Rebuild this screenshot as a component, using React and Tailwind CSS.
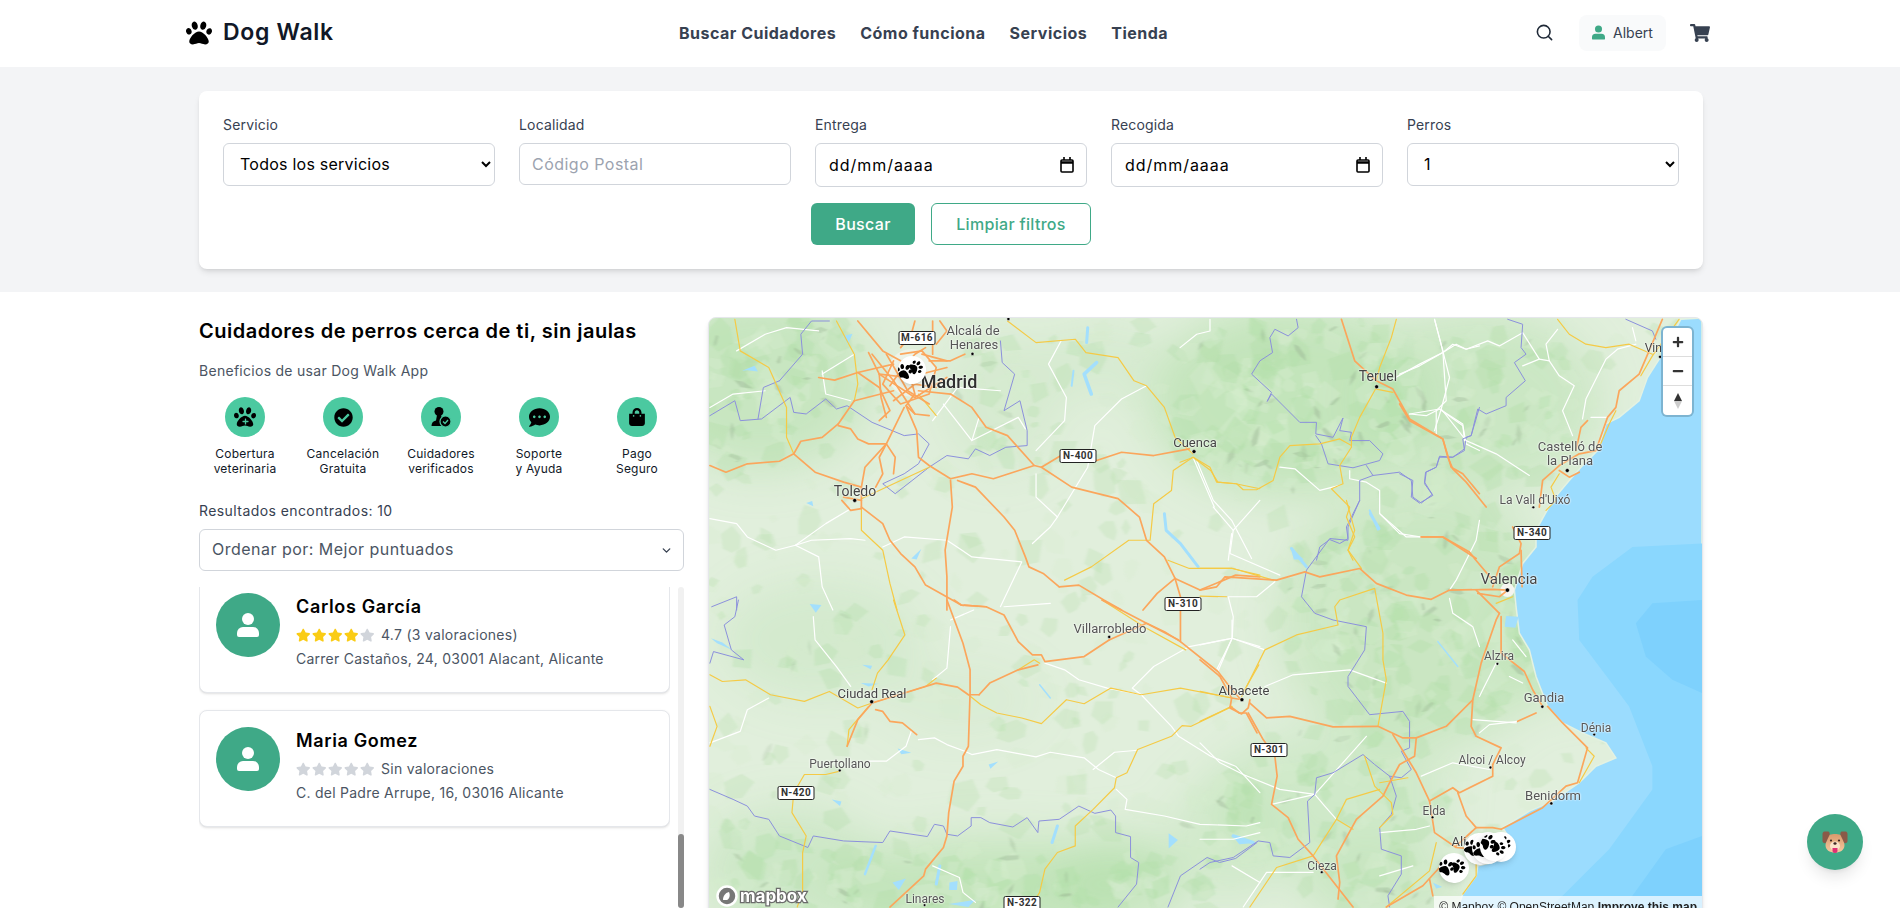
import { Search, ChevronDown } from 'lucide-react';
import { FaPaw, FaShoppingCart, FaCheckCircle, FaCommentDots, FaShoppingBag, FaStar, FaPlus, FaMinus } from 'react-icons/fa';

const MAP_LEFT = 708;
const MAP_TOP = 317;

// map data was traced per area, each one has its own offset and scale
const zones = {
    a: [700, 310, 2.8, 3],
    b: [700, 600, 2.8, 3],
    c: [1200, 500, 3, 3],
    d: [1180, 310, 3, 3],
    e: [1400, 310, 3, 3],
};

const toPage = (zone, flat) => {
    const [ox, oy, sx, sy] = zones[zone];
    const out = [];
    for (let i = 0; i < flat.length; i += 2) {
        out.push([+(ox + flat[i] / sx).toFixed(1), +(oy + flat[i + 1] / sy).toFixed(1)]);
    }
    return out;
};

const toPoints = (zone, flat) => toPage(zone, flat).map((p) => p.join(',')).join(' ');

const roads = {
    a: {
        orange: [
            [440, 30, 510, 120, 560, 150], [650, 30, 650, 130], [690, 150, 620, 130],
            [330, 200, 375, 208, 440, 185, 540, 160], [430, 270, 540, 240], [385, 340, 430, 270],
            [700, 250, 760, 290, 800, 350, 860, 375, 935, 465, 955, 470, 1010, 435, 1110, 450, 1180, 425, 1270, 435, 1370, 415],
            [935, 465, 820, 505, 760, 490, 700, 505, 640, 465, 610, 440, 605, 360, 575, 285],
            [570, 290, 520, 400, 460, 470, 450, 530, 450, 570],
            [25, 465, 70, 485, 130, 460, 220, 452, 260, 430, 280, 392, 340, 380, 385, 340],
            [260, 430, 320, 485, 400, 515, 450, 530], [385, 345, 420, 355, 440, 385, 470, 400, 520, 400, 545, 440, 540, 490],
            [520, 400, 500, 440, 510, 490, 490, 530], [700, 510, 705, 590, 685, 720, 690, 800, 690, 900],
            [450, 590, 510, 640, 530, 690, 560, 730, 600, 770, 630, 825, 680, 855, 730, 885, 800, 890],
            [720, 510, 770, 530, 850, 620, 880, 660, 910, 740, 920, 770, 960, 790, 1005, 830],
            [955, 470, 1040, 530, 1170, 565, 1230, 620, 1250, 690, 1300, 740, 1330, 805, 1345, 860],
            [1330, 805, 1400, 840, 1500, 795, 1568, 800], [1330, 805, 1280, 850, 1240, 900], [1005, 830, 1060, 825, 1130, 870, 1180, 900],
            [540, 150, 510, 220, 560, 280, 640, 250, 660, 170, 620, 120, 560, 130], [500, 190, 600, 260, 690, 200], [480, 130, 540, 210, 600, 310, 640, 315],
            [610, 240, 700, 250], [395, 570, 420, 600, 450, 595, 450, 570, 400, 560], [640, 150, 700, 150, 740, 130],
            [470, 125, 500, 190, 505, 260, 520, 320], [530, 225, 560, 180, 600, 130, 630, 110], [540, 270, 600, 220, 660, 230], [560, 110, 590, 70, 600, 30],
            [500, 190, 580, 200, 690, 170], [600, 310, 575, 285, 600, 250, 590, 210], [520, 130, 580, 240, 640, 280], [660, 100, 690, 60, 670, 30], [440, 185, 500, 230, 530, 300, 500, 330],
        ],
        yellow: [
            [95, 25, 110, 120, 190, 170, 240, 290, 240, 380, 260, 430], [380, 30, 410, 90, 430, 130, 440, 220, 430, 270],
            [860, 30, 940, 95, 1050, 85, 1080, 125, 1170, 140, 1215, 210, 1250, 225, 1300, 290, 1330, 380, 1380, 430],
            [1380, 440, 1325, 480, 1320, 540, 1270, 580, 1260, 690, 1200, 690, 1095, 770, 1020, 810],
            [1380, 440, 1430, 480, 1450, 515, 1500, 520, 1568, 535], [450, 565, 560, 510, 640, 470],
            [450, 590, 450, 660, 510, 720, 530, 820, 550, 900], [1310, 750, 1370, 775, 1490, 775, 1568, 795], [610, 250, 660, 315],
        ],
        white: [
            [25, 625, 100, 640, 130, 680, 210, 720, 265, 705, 330, 740, 340, 830, 370, 900], [265, 705, 310, 690, 420, 685, 460, 690],
            [265, 705, 350, 640, 420, 595], [510, 710, 570, 680, 690, 690, 760, 740, 900, 755, 840, 890],
            [1010, 90, 975, 160, 1025, 260, 1020, 330, 940, 420], [1250, 225, 1180, 265, 1105, 345, 1085, 470, 1000, 620, 980, 650, 930, 700],
            [1000, 620, 940, 560, 940, 490], [25, 290, 90, 250, 180, 240], [340, 190, 430, 130], [680, 280, 760, 390, 890, 320, 910, 355],
            [1380, 440, 1440, 590], [100, 120, 180, 70, 240, 50, 330, 60],
            [340, 180, 350, 250, 420, 270], [650, 330, 720, 230, 840, 240], [760, 390, 780, 320],
        ],
        purple: [
            [25, 315, 95, 270, 110, 330, 170, 325, 250, 260, 260, 305, 295, 310, 350, 265, 380, 295, 410, 285, 480, 335, 570, 375, 610, 370, 640, 400, 610, 460, 570, 490, 510, 520, 545, 550, 640, 470, 690, 435, 750, 445, 770, 415, 810, 435, 855, 410, 915, 405, 915, 360, 895, 270, 850, 300, 880, 190, 845, 155, 840, 90],
            [220, 210, 285, 130, 280, 70, 310, 30, 360, 30], [220, 210, 175, 230, 160, 325], [30, 890, 100, 860, 100, 900],
        ],
    },
    b: {
        orange: [
            [690, 0, 735, 130, 755, 210, 755, 280, 750, 440, 735, 470, 735, 500, 710, 545, 695, 640, 690, 710, 680, 745, 630, 810, 625, 830, 530, 924],
            [710, 0, 730, 15, 800, 20, 850, 45, 890, 125, 930, 165, 955, 165, 965, 185, 1075, 170, 1145, 120],
            [780, 285, 810, 250, 890, 210, 945, 195], [480, 310, 660, 250, 720, 262, 750, 285, 780, 285], [480, 310, 440, 360, 410, 440],
            [490, 330, 510, 335, 530, 365, 565, 370, 605, 405], [1145, 120, 1250, 70, 1340, 120], [1345, 0, 1345, 125, 1450, 215, 1490, 270, 1515, 300],
            [1125, 0, 1250, 70, 1300, 95, 1345, 125], [1485, 320, 1510, 340, 1530, 340, 1560, 400],
        ],
        yellow: [
            [540, 0, 572, 105, 525, 180, 495, 220, 480, 270], [25, 225, 60, 245, 125, 240, 195, 285, 290, 305, 360, 275, 440, 325, 480, 310],
            [410, 440, 415, 390, 470, 320], [480, 310, 630, 260, 660, 235],
            [390, 515, 350, 525, 290, 525, 260, 580, 255, 640, 295, 710, 285, 760, 285, 880, 270, 924],
            [750, 285, 785, 315, 830, 340, 900, 355, 955, 372, 1025, 300, 1075, 312, 1150, 265, 1235, 285, 1345, 265, 1490, 295],
            [1490, 320, 1375, 380, 1350, 378, 1320, 410, 1225, 450, 1195, 520, 1165, 535, 1160, 565, 1100, 630, 1050, 680, 1050, 740, 1000, 760, 965, 810, 950, 880, 925, 924],
            [1125, 0, 1250, 85, 1360, 150], [890, 210, 935, 180, 950, 190], [25, 320, 45, 380, 25, 440], [1565, 195, 1520, 280],
        ],
        white: [
            [315, 50, 320, 120, 380, 200, 420, 260], [190, 295, 130, 330, 110, 395, 25, 430], [700, 80, 690, 205, 650, 240], [850, 20, 980, 10], [765, 30, 700, 60],
            [590, 395, 575, 440, 520, 485, 470, 485], [610, 420, 655, 415, 690, 435, 740, 455, 760, 465, 830, 450, 940, 472, 980, 458, 1075, 475, 1115, 510, 1165, 535],
            [1100, 510, 1160, 458, 1225, 452], [965, 190, 1020, 210, 1060, 240, 1140, 265, 1235, 285, 1320, 380, 1340, 410, 1430, 470, 1500, 500, 1568, 580],
            [1235, 285, 1210, 265, 1270, 200, 1370, 140, 1490, 115, 1568, 140], [1490, 115, 1450, 215], [1490, 60, 1490, 115],
            [1165, 570, 1195, 600, 1190, 630, 1300, 650, 1400, 675, 1530, 680, 1568, 670], [650, 800, 725, 835, 735, 880, 770, 910], [1490, 800, 1568, 850],
        ],
        purple: [
            [25, 570, 90, 600, 130, 620, 150, 650, 190, 660, 220, 710, 300, 745, 315, 710, 400, 725, 510, 730, 530, 695, 635, 712, 655, 675, 680, 680, 690, 705, 720, 710, 758, 680, 758, 655, 785, 655, 810, 670, 875, 683, 915, 655, 945, 700, 948, 665, 1005, 660, 1060, 620, 1105, 642, 1150, 632, 1163, 650, 1163, 700, 1205, 712, 1205, 775, 1228, 790, 1222, 855, 1170, 924],
            [1310, 924, 1345, 830, 1420, 775, 1455, 790, 1500, 778, 1560, 730], [25, 190, 35, 155, 120, 180, 85, 150, 65, 75, 95, 50, 105, 0],
        ],
    },
    c: {
        orange: [
            [0, 480, 60, 530, 95, 595, 127, 600],
            [0, 270, 50, 260, 75, 230, 230, 240, 315, 215, 360, 230, 480, 205, 530, 250, 620, 285, 695, 298, 750, 270, 880, 268, 925, 270],
            [95, 595, 90, 625, 125, 643, 145, 625, 150, 600],
            [150, 610, 200, 655, 270, 650, 400, 682, 535, 680, 610, 715, 650, 715, 740, 680, 820, 600, 845, 490, 890, 360, 900, 340],
            [145, 640, 190, 720, 225, 770, 232, 830, 215, 915, 265, 955, 295, 1020, 340, 1070, 460, 1224],
            [580, 705, 650, 820, 690, 905, 705, 1000, 770, 1045, 835, 1050], [650, 715, 645, 770, 600, 795, 570, 850, 550, 890, 470, 960, 410, 1070, 420, 1150, 415, 1200],
            [690, 905, 760, 865, 780, 880, 880, 830, 880, 795], [775, 880, 800, 950, 830, 985, 880, 985, 905, 990], [770, 1040, 830, 985],
            [905, 990, 1030, 925, 1100, 860, 1135, 850, 1165, 745, 1090, 670, 1045, 620], [820, 600, 815, 680, 830, 710, 905, 745, 880, 795],
            [900, 340, 830, 270], [905, 350, 905, 460, 975, 515, 1000, 570, 1030, 620], [955, 665, 1010, 640],
            [665, 110, 730, 110, 810, 155, 825, 175, 880, 240], [965, 150, 968, 260], [940, 80, 965, 130, 960, 160, 900, 200, 880, 260],
            [560, 1224, 670, 1160, 720, 1105], [690, 1140, 700, 1190], [835, 280, 900, 290, 925, 270],
        ],
        yellow: [
            [440, 0, 465, 90, 445, 150, 485, 205], [0, 205, 100, 205, 220, 240], [0, 288, 80, 290], [0, 575, 95, 595], [0, 665, 95, 620],
            [125, 590, 195, 450, 290, 405, 415, 375, 405, 320, 420, 300, 525, 265, 550, 400, 550, 480, 560, 540, 535, 680],
            [495, 770, 525, 860, 575, 910, 580, 945, 540, 985], [540, 850, 625, 835], [150, 1224, 230, 1105, 340, 1070, 410, 960, 440, 900, 540, 870],
            [410, 960, 460, 990], [710, 1030, 690, 1115, 560, 1224], [1140, 850, 1185, 770, 1160, 745], [830, 1090, 830, 1130, 790, 1185], [890, 310, 940, 290],
        ],
        white: [
            [40, 20, 100, 90, 90, 160, 240, 225], [100, 90, 180, 0], [225, 245, 170, 290, 85, 290, 100, 350, 97, 415, 50, 510], [0, 435, 97, 415, 195, 450],
            [0, 730, 60, 790, 130, 825, 240, 870, 345, 885, 375, 920, 410, 960], [195, 560, 280, 525, 450, 510, 560, 550], [215, 915, 345, 885, 500, 710],
            [0, 1020, 100, 1020, 180, 1000], [750, 295, 760, 340, 820, 380, 840, 440], [890, 490, 850, 570, 840, 590], [820, 660, 950, 670], [665, 830, 760, 790, 870, 810],
            [840, 700, 870, 675, 955, 665], [540, 1000, 650, 990, 690, 980], [940, 420, 980, 470], [930, 530, 970, 550], [540, 40, 600, 100, 665, 110],
            [840, 60, 830, 120, 800, 180, 770, 240, 750, 270], [130, 1224, 200, 1120, 340, 1120], [540, 1130, 640, 1100],
        ],
        purple: [
            [480, 0, 445, 80, 445, 120, 390, 115, 320, 210, 305, 290, 345, 340, 400, 360, 500, 380, 495, 450, 445, 530, 445, 560, 510, 645, 610, 635, 630, 665, 630, 745, 605, 755, 635, 810, 605, 835, 570, 830, 525, 795, 490, 765, 400, 820, 350, 835, 345, 885, 323, 905, 330, 1030, 270, 1075, 220, 1070, 210, 1030, 175, 1025, 100, 1075, 30, 1090, 0, 1110],
            [570, 830, 590, 890, 575, 945, 540, 985, 545, 1050, 605, 1070, 605, 1125, 565, 1190, 570, 1224],
        ],
    },
    d: {
        orange: [[485, 25, 525, 150, 590, 210, 640, 235, 690, 325, 790, 385, 815, 470, 850, 490, 900, 550], [725, 680, 790, 680, 860, 725, 890, 745]],
        yellow: [
            [650, 25, 635, 80, 600, 170, 590, 210], [590, 230, 540, 320, 515, 380, 515, 410, 480, 465, 490, 520, 455, 535, 510, 590, 500, 620, 525, 680, 505, 720, 520, 750],
            [0, 455, 40, 440, 90, 470, 110, 515, 170, 520, 190, 538, 230, 538, 280, 510, 300, 440, 330, 405, 420, 400, 480, 385, 515, 405], [590, 235, 640, 245],
        ],
        white: [
            [0, 110, 50, 70, 90, 60, 90, 25], [300, 470, 345, 475, 420, 540, 480, 525], [510, 480, 510, 505, 560, 515, 600, 540, 600, 610, 680, 680, 725, 680],
            [765, 25, 790, 120, 800, 270, 770, 300, 770, 370], [640, 205, 720, 160, 790, 125, 830, 100, 860, 115, 900, 105],
            [690, 310, 740, 315, 780, 295, 850, 345, 860, 400], [50, 450, 100, 570, 155, 630, 215, 745], [155, 670, 145, 750], [860, 400, 900, 420],
        ],
        purple: [
            [350, 25, 355, 50, 325, 75, 285, 55, 270, 80, 278, 125, 240, 150, 215, 190, 275, 245, 262, 272, 275, 250, 360, 335, 410, 335, 408, 370, 460, 380, 490, 322, 480, 360, 515, 365, 510, 390, 570, 390, 610, 430, 600, 450, 520, 472, 445, 460, 425, 400, 408, 375],
            [560, 465, 580, 495, 660, 485, 695, 510, 700, 560, 725, 578, 758, 552, 735, 515, 738, 485, 770, 470, 780, 437, 820, 440, 855, 415, 860, 380, 875, 375, 900, 290],
            [580, 495, 540, 510, 540, 570, 500, 650, 505, 685, 480, 700, 450, 688, 420, 710, 410, 750],
        ],
    },
    e: {
        orange: [
            [0, 280, 30, 330, 130, 385, 145, 440, 160, 475, 200, 515, 260, 590], [790, 25, 750, 120, 720, 190, 660, 240, 650, 290, 625, 320, 590, 420, 540, 430, 480, 465, 430, 510, 420, 590],
            [565, 330, 545, 350, 530, 420], [480, 480, 510, 500, 540, 485],
        ],
        yellow: [[475, 25, 510, 70, 560, 100, 620, 110, 690, 100, 760, 130], [840, 25, 760, 135, 725, 195], [480, 490, 455, 530, 470, 570, 440, 600], [650, 300, 630, 340, 600, 410]],
        white: [
            [105, 25, 130, 120, 150, 200, 125, 295, 200, 390, 290, 430, 390, 495],
            [0, 190, 60, 165, 130, 125, 160, 100, 200, 115, 265, 90, 300, 105, 370, 65, 420, 145, 450, 150, 440, 100, 475, 55],
            [450, 150, 480, 195, 525, 225, 490, 300, 520, 375], [30, 310, 120, 295, 190, 340, 195, 390], [125, 295, 105, 360], [370, 165, 420, 145],
            [550, 325, 560, 265, 620, 145, 655, 115, 710, 100], [575, 320, 625, 320], [700, 50, 710, 90],
        ],
        purple: [
            [325, 25, 370, 40, 365, 110, 380, 130, 345, 155, 378, 210, 320, 260, 320, 285, 260, 310, 235, 295, 215, 375, 190, 385, 195, 420, 160, 440, 120, 440, 110, 470, 80, 485, 75, 520, 100, 555, 60, 578, 35, 560, 40, 510, 0, 490],
            [680, 25, 760, 60, 770, 85],
        ],
    },
};

// long thin reservoirs, drawn as wide strokes
const rivers = [
    ['a', [1300, 610, 1305, 660, 1345, 700, 1395, 770], 3], ['a', [1110, 155, 1075, 190, 1095, 250], 3.5], ['a', [1085, 50, 1082, 95], 3], ['a', [1045, 180, 1040, 225], 2],
    ['c', [275, 145, 320, 200], 3], ['c', [715, 425, 775, 500], 1.5], ['c', [510, 30, 535, 88], 2], ['b', [950, 255, 980, 295], 1.5], ['b', [1000, 680, 985, 730], 3],
    ['b', [490, 740, 460, 825], 2.5], ['b', [670, 800, 660, 855], 3], ['d', [572, 610, 598, 655], 3], ['c', [100, 1010, 160, 1030], 3.5],
];

const lakes = [
    ['a', [115, 180, 150, 165, 160, 182, 130, 178]], ['a', [400, 75, 425, 68, 412, 100]], ['a', [590, 745, 618, 716, 605, 748]], ['a', [295, 578, 312, 572, 315, 588]],
    ['b', [305, 12, 338, 15, 322, 38]], ['b', [28, 115, 60, 128, 88, 150, 45, 130]], ['b', [452, 195, 480, 198, 476, 208]], ['b', [448, 250, 498, 252, 470, 260]],
    ['b', [552, 447, 590, 460, 562, 464]], ['b', [367, 600, 394, 606, 390, 620]], ['b', [807, 495, 834, 486, 812, 508]], ['b', [1312, 702, 1338, 722, 1312, 748]],
    ['b', [1490, 708, 1548, 732, 1510, 735]], ['b', [697, 850, 720, 846, 718, 873, 696, 873]], ['b', [537, 850, 575, 838, 555, 873]], ['b', [695, 915, 770, 902, 750, 924]],
    ['c', [920, 348, 958, 350, 948, 383, 916, 380]], ['c', [700, 1150, 728, 1164, 710, 1168]], ['d', [332, 712, 372, 748, 342, 748]],
];

const coast = [
    ...toPage('e', [845, 25, 790, 130, 745, 200, 720, 270, 660, 320, 620, 340, 595, 420, 545, 470, 510, 510, 460, 570]),
    ...toPage('c', [1060, 0, 1010, 90, 1010, 140, 970, 190, 945, 270, 950, 320, 960, 400, 990, 450, 1010, 530, 1045, 620, 1090, 670, 1150, 700, 1220, 730, 1250, 775, 1190, 800, 1140, 850, 1060, 905, 990, 935, 910, 985, 945, 1040, 880, 1090, 835, 1100, 830, 1130, 790, 1185, 760, 1270]),
    [1703, 924], [1703, 317],
];

const seaMid = [
    ...toPage('c', [1510, 130, 1300, 140, 1180, 230, 1135, 300, 1140, 420, 1230, 540, 1290, 620, 1360, 800, 1360, 870, 1230, 1050, 1090, 1190, 1000, 1270]),
    [1703, 924],
];

const seaDeep = toPage('c', [1510, 300, 1360, 310, 1310, 370, 1340, 470, 1420, 540, 1510, 580]);
const seaDeepLow = toPage('c', [1510, 1010, 1400, 1050, 1300, 1190, 1240, 1270, 1510, 1270]);

// greener and darker zones of the terrain: x, y, radius x, radius y, strength
const hills = [
    [760, 380, 110, 90, 0.8], [1290, 400, 140, 95, 0.95], [1480, 400, 120, 90, 0.7], [1420, 620, 140, 130, 0.75], [1560, 640, 70, 60, 0.6],
    [1330, 800, 120, 70, 0.55], [1000, 890, 170, 50, 0.95], [790, 870, 90, 60, 0.65], [1120, 880, 60, 45, 0.9], [1380, 885, 80, 40, 0.7],
    [1000, 400, 60, 70, 0.35], [820, 640, 100, 60, 0.4], [1230, 840, 60, 60, 0.5], [1100, 360, 60, 40, 0.3], [960, 700, 80, 40, 0.2],
];

const strengthAt = (x, y) => {
    let s = 0.1;
    hills.forEach(([cx, cy, rx, ry, v]) => {
        const d = ((x - cx) / rx) ** 2 + ((y - cy) / ry) ** 2;
        if (d < 1) s += v * (1 - d * 0.6);
    });
    return Math.min(s, 1);
};

const buildTerrain = () => {
    let seed = 4217;
    const rnd = () => {
        seed = (seed * 16807) % 2147483647;
        return seed / 2147483647;
    };
    const patches = [];
    for (let i = 0; i < 2600; i++) {
        const x = MAP_LEFT + rnd() * 995;
        const y = MAP_TOP + rnd() * 600;
        const s = strengthAt(x, y);
        if (rnd() > s + 0.1) continue;
        const dark = rnd() < s * 0.22;
        const r = dark ? 3 + rnd() * 8 : 5 + rnd() * 13;
        const squash = dark ? 0.3 : 0.6 + rnd() * 0.4;
        const turn = rnd() * 3.14;
        const count = 4 + Math.floor(rnd() * 3);
        const pts = [];
        for (let k = 0; k < count; k++) {
            const a = (k / count) * 6.283;
            const rr = r * (0.7 + rnd() * 0.5);
            const px = Math.cos(a) * rr;
            const py = Math.sin(a) * rr * squash;
            pts.push(`${(x + px * Math.cos(turn) - py * Math.sin(turn)).toFixed(1)},${(y + px * Math.sin(turn) + py * Math.cos(turn)).toFixed(1)}`);
        }
        patches.push({
            pts: pts.join(' '),
            fill: dark ? '#93ad8d' : rnd() < 0.5 ? '#b4dfab' : '#d5ecce',
            opacity: dark ? 0.14 + s * 0.26 : 0.25 + s * 0.2,
        });
    }
    return patches;
};

const terrain = buildTerrain();

const labels = [
    ['Madrid', 948, 381, 'text-[18px] font-medium text-[#2f2f2f]'], ['Alcalá de', 972, 329, 'text-[13px] text-[#555]'], ['Henares', 973, 343, 'text-[13px] text-[#555]'],
    ['Toledo', 854, 490, 'text-[14px] text-[#444]'], ['Cuenca', 1194, 441, 'text-[13px] text-[#444]'], ['Teruel', 1377, 375, 'text-[14px] text-[#444]'],
    ['Vinaròs', 1664, 347, 'text-[12px] text-[#444]'], ['Castelló de', 1569, 445, 'text-[13px] text-[#555]'], ['la Plana', 1569, 459, 'text-[13px] text-[#555]'],
    ["La Vall d'Uixó", 1534, 499, 'text-[12px] text-[#555]'], ['Valencia', 1508, 578, 'text-[15px] text-[#444]'], ['Alzira', 1498, 655, 'text-[12px] text-[#555]'],
    ['Gandia', 1543, 696, 'text-[13px] text-[#555]'], ['Dénia', 1595, 727, 'text-[12px] text-[#555]'], ['Alcoi / Alcoy', 1491, 759, 'text-[12px] text-[#555]'],
    ['Benidorm', 1552, 794, 'text-[13px] text-[#555]'], ['Elda', 1433, 810, 'text-[12px] text-[#555]'], ['Cieza', 1321, 865, 'text-[12px] text-[#555]'],
    ['Albacete', 1243, 689, 'text-[13px] text-[#444]'], ['Villarrobledo', 1109, 627, 'text-[13px] text-[#555]'], ['Ciudad Real', 871, 692, 'text-[13px] text-[#444]'],
    ['Puertollano', 839, 763, 'text-[12px] text-[#555]'], ['Linares', 924, 898, 'text-[12px] text-[#555]'], ['Alicante', 1474, 840, 'text-[13px] text-[#444]'],
];

const cityDots = [
    [972, 353, 1.6], [854, 500, 2], [1194, 451, 2], [1377, 386, 2], [1661, 356, 1.6], [1568, 470, 2], [1534, 507, 1.4], [1508, 590, 2.2], [1498, 664, 1.4], [1543, 707, 1.6],
    [1595, 735, 1.4], [1491, 768, 1.4], [1552, 804, 1.6], [1433, 818, 1.4], [1322, 873, 1.4], [1242, 700, 2], [1109, 637, 1.6], [871, 702, 2], [839, 771, 1.4], [924, 906, 1.4], [1008, 318, 1.6],
];

const shields = [
    ['M-616', 916, 337], ['N-400', 1077, 455], ['N-310', 1182, 603], ['N-340', 1531, 532], ['N-301', 1268, 749], ['N-420', 795, 792], ['N-322', 1021, 902],
];

const pins = [
    [911, 369, 28, 20], [1453, 867, 30, 35], [1500, 846, 30, 0], [1479, 848, 32, 40], [1487, 847, 32, 20], [1493, 846, 28, 70],
];

const benefits = [
    { lines: ['Cobertura', 'veterinaria'], icon: <VetIcon /> },
    { lines: ['Cancelación', 'Gratuita'], icon: <FaCheckCircle size={19} /> },
    { lines: ['Cuidadores', 'verificados'], icon: <VerifiedIcon /> },
    { lines: ['Soporte', 'y Ayuda'], icon: <FaCommentDots size={21} /> },
    { lines: ['Pago', 'Seguro'], icon: <FaShoppingBag size={18} /> },
];

const sitters = [
    { name: 'Carlos García', rating: 4, text: '4.7 (3 valoraciones)', address: 'Carrer Castaños, 24, 03001 Alacant, Alicante' },
    { name: 'Maria Gomez', rating: 0, text: 'Sin valoraciones', address: 'C. del Padre Arrupe, 16, 03016 Alicante' },
];

function VetIcon() {
    return (
        <span className="relative flex items-center justify-center">
            <FaPaw size={22} />
            <FaPlus size={7} className="absolute top-[12px] left-[7.5px] text-[#4bc9a0]" />
        </span>
    );
}

function VerifiedIcon() {
    return (
        <svg width="22" height="22" viewBox="0 0 22 22" fill="#000">
            <circle cx="9" cy="5.5" r="4.5" />
            <path d="M7 9h4l1 4h2.5l-1.5 7H1.500c0-3 1.500-5 4.500-5.500z" />
            <circle cx="15.500" cy="15.500" r="5.500" stroke="#4bc9a0" strokeWidth="1.200" />
            <path d="M13 15.500l2 2 3-3.500" stroke="#4bc9a0" strokeWidth="1.300" fill="none" />
        </svg>
    );
}

function PersonIcon({ className }) {
    return (
        <svg className={className} viewBox="0 0 22 24" fill="currentColor">
            <circle cx="11" cy="6" r="6" />
            <path d="M6 14h10a6 6 0 0 1 6 6v2a2 2 0 0 1-2 2H2a2 2 0 0 1-2-2v-2a6 6 0 0 1 6-6z" />
        </svg>
    );
}

function DogFace() {
    return (
        <svg width="26" height="24" viewBox="0 0 26 24">
            <defs>
                <linearGradient id="dogFur" x1="0" y1="0" x2="0" y2="1">
                    <stop offset="0" stopColor="#d99a6c" />
                    <stop offset="1" stopColor="#f4c9a0" />
                </linearGradient>
            </defs>
            <path d="M5 7C6 3 20 3 21 7l1.500 8c0 5-4 7.500-9.500 7.500S3.500 20 3.500 15z" fill="url(#dogFur)" />
            <path d="M6 1.500H2.500C1 1.500.500 3 .500 4v7c0 2 2.500 3 3.500 1.500L7.500 5C8 3.500 7.500 1.500 6 1.500z" fill="#8a5a48" />
            <path d="M20 1.500h3.500c1.500 0 2 1.500 2 2.500v7c0 2-2.500 3-3.500 1.500L18.500 5C18 3.500 18.500 1.500 20 1.500z" fill="#8a5a48" />
            <ellipse cx="13" cy="16" rx="5" ry="4.500" fill="#fbe3ca" />
            <circle cx="9" cy="10.500" r="1.100" fill="#3a2420" />
            <circle cx="17" cy="10.500" r="1.100" fill="#3a2420" />
            <ellipse cx="13" cy="13.500" rx="1.600" ry="1.200" fill="#3a2420" />
            <path d="M10.500 18h5v2.500a2.500 2.500 0 0 1-5 0z" fill="#df2f74" />
        </svg>
    );
}

function Field({ label, children }) {
    return (
        <div>
            <label className="block text-sm text-[#374151] mb-2 tracking-[0.012em]">{label}</label>
            {children}
        </div>
    );
}

function DateField() {
    return (
        <div className="flex items-center justify-between h-[44px] border border-[#d1d5db] rounded-md pl-[13px] pr-3 bg-white text-base text-black tracking-[0.06em]">
            <span>dd/mm/aaaa</span>
            <svg width="14" height="16" viewBox="0 0 14 16" fill="none" stroke="#000" strokeWidth="1.600">
                <rect x="1" y="3" width="12" height="12" rx="1" />
                <path d="M1 5.500h12" strokeWidth="2.500" />
                <path d="M4 0v3M10 0v3" />
            </svg>
        </div>
    );
}

function MapView() {
    return (
        <div className="relative flex-1 h-[600px] rounded-lg overflow-hidden border border-[#e5e7eb] shadow-md bg-[#e1efdc] [font-family:Roboto,sans-serif]">
            <svg className="block w-full h-full" viewBox="708 317 995 600" preserveAspectRatio="none">
                <defs>
                    <filter id="soft">
                        <feGaussianBlur stdDeviation="0.800" />
                    </filter>
                    <filter id="wide" x="-40%" y="-40%" width="180%" height="180%">
                        <feGaussianBlur stdDeviation="22" />
                    </filter>
                </defs>
                <rect x="708" y="317" width="995" height="600" fill="#e1efdc" />
                <g filter="url(#wide)">
                    {hills.map(([cx, cy, rx, ry, v], i) => (
                        <ellipse key={i} cx={cx} cy={cy} rx={rx} ry={ry} fill="#b4dfab" opacity={v * 0.7} />
                    ))}
                </g>
                <g filter="url(#soft)">
                    {terrain.map((p, i) => (
                        <polygon key={i} points={p.pts} fill={p.fill} opacity={p.opacity} />
                    ))}
                </g>
                <polygon points={coast.map((p) => p.join(',')).join(' ')} fill="#9bdcfe" stroke="#e4f2e2" strokeWidth="1.500" />
                <polygon points={seaMid.map((p) => p.join(',')).join(' ')} fill="#8ad7fe" />
                <polygon points={seaDeep.map((p) => p.join(',')).join(' ')} fill="#7ed1fd" />
                <polygon points={seaDeepLow.map((p) => p.join(',')).join(' ')} fill="#7ed1fd" />
                {lakes.map(([zone, flat], i) => (
                    <polygon key={i} points={toPoints(zone, flat)} fill="#a3dffd" />
                ))}
                {rivers.map(([zone, flat, w], i) => (
                    <polyline key={i} points={toPoints(zone, flat)} fill="none" stroke="#a3dffd" strokeWidth={w} strokeLinejoin="round" strokeLinecap="round" />
                ))}
                <circle cx="911" cy="372" r="24" fill="#f1f4ec" opacity="0.75" />
                <circle cx="1508" cy="590" r="7" fill="#f5f5f0" />
                <g fill="none" strokeLinejoin="round" strokeLinecap="round">
                    {Object.entries(roads).map(([zone, r]) => (
                        <g key={zone}>
                            {r.white.map((flat, i) => (
                                <polyline key={i} points={toPoints(zone, flat)} stroke="#ffffff" strokeWidth="1.200" />
                            ))}
                            {r.purple.map((flat, i) => (
                                <polyline key={i} points={toPoints(zone, flat)} stroke="#8b90dc" strokeWidth="1" />
                            ))}
                        </g>
                    ))}
                    {Object.entries(roads).map(([zone, r]) => (
                        <g key={zone}>
                            {r.yellow.map((flat, i) => (
                                <polyline key={i} points={toPoints(zone, flat)} stroke="#f5ca45" strokeWidth="1.200" />
                            ))}
                            {r.orange.map((flat, i) => (
                                <polyline key={i} points={toPoints(zone, flat)} stroke="#fba65c" strokeWidth="1.700" />
                            ))}
                        </g>
                    ))}
                </g>
                {cityDots.map(([x, y, r], i) => (
                    <circle key={i} cx={x} cy={y} r={r} fill="#000" stroke="#fff" strokeWidth="0.500" />
                ))}
            </svg>

            {labels.map(([text, x, y, cls]) => (
                <span
                    key={text}
                    className={`absolute -translate-x-1/2 -translate-y-1/2 whitespace-nowrap leading-none [text-shadow:0_0_2px_#fff,0_0_2px_#fff] ${cls}`}
                    style={{ left: x - MAP_LEFT, top: y - MAP_TOP }}
                >
                    {text}
                </span>
            ))}

            {shields.map(([text, x, y]) => (
                <span
                    key={text}
                    className="absolute -translate-x-1/2 -translate-y-1/2 w-[37px] h-[14px] flex items-center justify-center bg-white border border-[#222] rounded-[2px] text-[10px] font-bold leading-none tracking-[0.04em] text-[#333]"
                    style={{ left: x - MAP_LEFT, top: y - MAP_TOP }}
                >
                    {text}
                </span>
            ))}

            {pins.map(([x, y, size, rot], i) => (
                <div
                    key={i}
                    className="absolute rounded-full bg-white shadow-md flex items-center justify-center overflow-hidden text-black"
                    style={{ left: x - MAP_LEFT, top: y - MAP_TOP, width: size, height: size, transform: `translate(-50%, -50%) rotate(${rot}deg)` }}
                >
                    <FaPaw size={16} className="-ml-[6px] mt-[8px] shrink-0 rotate-[-10deg]" />
                    <FaPaw size={14} className="-ml-[5px] -mt-[9px] shrink-0 rotate-[40deg]" />
                </div>
            ))}

            <div className="absolute top-[10px] right-[10px] w-[29px] rounded-[4px] bg-white ring-2 ring-[#7db4d1] flex flex-col text-[#333]">
                <button className="h-[29px] flex items-center justify-center border-b border-[#ddd]"><FaPlus size={12} /></button>
                <button className="h-[29px] flex items-center justify-center border-b border-[#ddd]"><FaMinus size={12} /></button>
                <button className="h-[29px] flex flex-col items-center justify-center">
                    <span className="w-0 h-0 border-x-[4px] border-x-transparent border-b-[8px] border-b-[#333]" />
                    <span className="w-0 h-0 border-x-[4px] border-x-transparent border-t-[8px] border-t-[#ccc]" />
                </button>
            </div>

            <div className="absolute left-[7px] bottom-[9px] flex items-center gap-[2px]">
                <svg width="22" height="22" viewBox="0 0 22 22">
                    <circle cx="11" cy="11" r="9.500" fill="#777" stroke="#fff" strokeWidth="2.500" />
                    <path d="M7 15c0-4 2-7 6-8 1.500 3 .5 7-2 8z" fill="#fff" />
                </svg>
                <span className="text-[17px] font-bold leading-none text-white [-webkit-text-stroke:2.5px_#6b6b6b] [paint-order:stroke_fill] [font-family:Inter,sans-serif]">mapbox</span>
            </div>

            <div className="absolute right-0 bottom-0 h-[20px] px-[5px] bg-white/70 text-[12px] leading-[20px] pt-[1px] text-[#222] whitespace-nowrap [font-family:'Liberation_Sans',sans-serif]">
                © Mapbox © OpenStreetMap <b>Improve this map</b>
            </div>
        </div>
    );
}

export default function App() {
    return (
        <div className="relative h-[908px] overflow-hidden bg-white [font-family:Inter,sans-serif]">
            <header className="h-[67px] bg-white">
                <div className="max-w-[1536px] mx-auto h-full pl-1 pr-1 pb-[2px] flex items-center">
                    <div className="w-[493px] flex items-center gap-[11px]">
                        <FaPaw size={26} className="text-black" />
                        <span className="text-[23px] font-semibold text-[#111827] tracking-[0.03em]">Dog Walk</span>
                    </div>
                    <nav className="flex-1 flex items-center gap-[24px] text-base font-bold text-[#374151] tracking-[0.031em]">
                        <a>Buscar Cuidadores</a>
                        <a>Cómo funciona</a>
                        <a>Servicios</a>
                        <a>Tienda</a>
                    </nav>
                    <div className="flex items-center">
                        <Search size={19} strokeWidth={2} className="text-[#1f2937] mr-[25px]" />
                        <button className="h-[36px] w-[87px] rounded-lg bg-[#f9fafb] flex items-center justify-center gap-2 text-sm text-[#374151]">
                            <PersonIcon className="w-[13px] h-[15px] text-[#3fa987]" />
                            Albert
                        </button>
                        <FaShoppingCart size={20} className="text-[#374151] ml-[24px] mr-[4px]" />
                    </div>
                </div>
            </header>

            <section className="bg-[#f3f4f6] pt-6 pb-[23px]">
                <div className="max-w-[1536px] mx-auto pl-[17px] pr-[15px]">
                    <div className="bg-white rounded-lg shadow-md p-6">
                        <div className="grid grid-cols-5 gap-6">
                            <Field label="Servicio">
                                <select className="w-full h-[43px] border border-[#d1d5db] rounded-md px-3 pb-[2px] bg-white text-base text-black tracking-[0.015em]">
                                    <option>Todos los servicios</option>
                                </select>
                            </Field>
                            <Field label="Localidad">
                                <input
                                    placeholder="Código Postal"
                                    className="w-full h-[42px] border border-[#d1d5db] rounded-md px-3 text-base tracking-[0.03em] placeholder:text-[#9ca3af]"
                                />
                            </Field>
                            <Field label="Entrega"><DateField /></Field>
                            <Field label="Recogida"><DateField /></Field>
                            <Field label="Perros">
                                <select className="w-full h-[43px] border border-[#d1d5db] rounded-md px-3 pb-[2px] bg-white text-base text-black">
                                    <option>1</option>
                                </select>
                            </Field>
                        </div>
                        <div className="mt-[16px] flex justify-center gap-4">
                            <button className="w-[104px] h-[42px] rounded-md bg-[#3fa987] text-white text-base font-medium tracking-[0.02em]">Buscar</button>
                            <button className="w-[160px] h-[42px] rounded-md border border-[#3fa987] text-[#3fa987] text-base font-medium tracking-[0.02em]">Limpiar filtros</button>
                        </div>
                    </div>
                </div>
            </section>

            <main className="max-w-[1536px] mx-auto pl-[17px] pr-[15px] pt-[25px] flex gap-6">
                <div className="w-[485px] shrink-0">
                    <h1 className="text-xl font-semibold text-black tracking-[0.025em]">Cuidadores de perros cerca de ti, sin jaulas</h1>
                    <p className="mt-4 text-sm text-[#4b5563] tracking-[0.02em]">Beneficios de usar Dog Walk App</p>
                    <div className="mt-4 -ml-[3px] grid grid-cols-[98px_98px_98px_98px_98px]">
                        {benefits.map((b) => (
                            <div key={b.lines[0]} className="flex flex-col items-center">
                                <div className="w-10 h-10 rounded-full bg-[#4bc9a0] flex items-center justify-center text-black">{b.icon}</div>
                                <div className="mt-[9px] text-center text-[12px] leading-[15px] text-[#111827] tracking-[0.02em]">
                                    {b.lines.map((line) => <div key={line}>{line}</div>)}
                                </div>
                            </div>
                        ))}
                    </div>
                    <p className="mt-[25px] text-sm text-[#374151] tracking-[0.03em]">Resultados encontrados: 10</p>
                    <div className="relative mt-2">
                        <select className="w-full h-[42px] appearance-none border border-[#d1d5db] rounded-md pl-3 pr-8 pb-[2px] bg-white text-base text-[#4b5563] tracking-[0.03em]">
                            <option>Ordenar por: Mejor puntuados</option>
                        </select>
                        <ChevronDown size={13} strokeWidth={2.500} className="absolute right-[11px] top-[15px] text-[#374151]" />
                    </div>
                    <div className="mt-4 h-[321px] flex gap-2 overflow-hidden">
                        <div className="w-[471px] h-full overflow-hidden">
                            <div className="-mt-[11px] flex flex-col gap-[17px]">
                                {sitters.map((s) => (
                                    <div key={s.name} className="h-[117px] border border-[#e5e7eb] rounded-lg shadow-sm p-4 flex gap-4 bg-white">
                                        <div className="w-16 h-16 rounded-full bg-[#3fa987] flex items-center justify-center shrink-0">
                                            <PersonIcon className="w-[22px] h-[24px] text-white" />
                                        </div>
                                        <div>
                                            <div className="text-lg leading-7 font-semibold text-black tracking-[0.036em]">{s.name}</div>
                                            <div className="mt-1 h-5 flex items-center text-sm text-[#4b5563] tracking-[0.02em]">
                                                <span className="flex mr-[5px]">
                                                    {[1, 2, 3, 4, 5].map((n) => (
                                                        <FaStar key={n} size={14.500} className={`mr-[1.500px] ${n <= s.rating ? 'text-[#facc15]' : 'text-[#d1d5db]'}`} />
                                                    ))}
                                                </span>
                                                {s.text}
                                            </div>
                                            <div className="mt-1 text-sm text-[#4b5563] tracking-[0.018em]">{s.address}</div>
                                        </div>
                                    </div>
                                ))}
                            </div>
                        </div>
                        <div className="w-[6px] h-full bg-[#f1f1f1] rounded-full overflow-hidden">
                            <div className="mt-[247px] h-full bg-[#888] rounded-full" />
                        </div>
                    </div>
                </div>
                <MapView />
            </main>

            <button className="fixed right-[37px] bottom-[38px] w-14 h-14 rounded-full bg-[#3fa987] shadow-lg flex items-center justify-center">
                <DogFace />
            </button>
        </div>
    );
}
